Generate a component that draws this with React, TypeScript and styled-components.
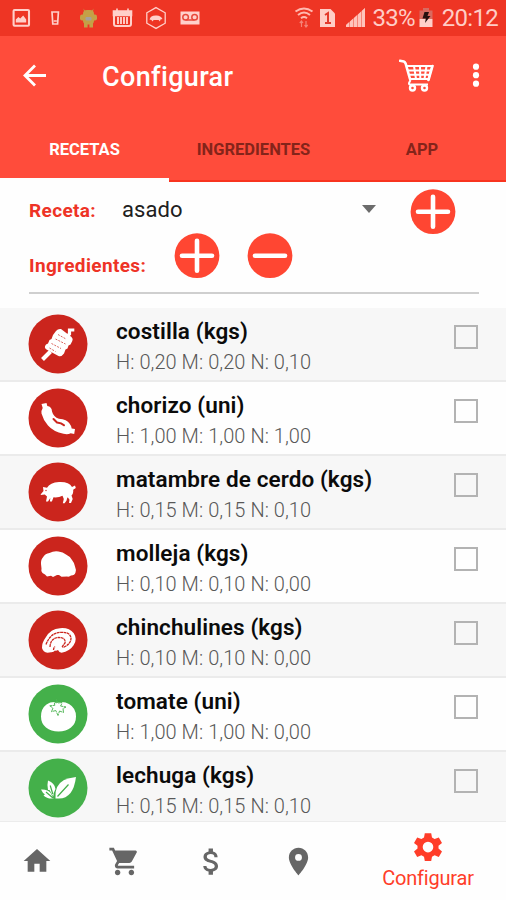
import React from 'react';
import styled, { createGlobalStyle } from 'styled-components';

const GlobalStyle = createGlobalStyle`
  * { box-sizing: border-box; }
  body { margin: 0; background: #fefefe; font-family: Roboto, "Liberation Sans", sans-serif; }
  svg { display: block; flex: none; }
`;

const Screen = styled.div`
  width: 506px;
  height: 900px;
  display: flex;
  flex-direction: column;
  overflow: hidden;
  background: #fefefe;
`;

const StatusBar = styled.div`
  height: 36px;
  flex: none;
  background: #ee3524;
  color: #ffcdc6;
  display: flex;
  justify-content: space-between;
  align-items: center;
  padding: 0 8px 0 12px;
`;

const StatusGroup = styled.div`
  display: flex;
  align-items: center;
`;

const StatusIcon = styled.span<{ $left: number }>`
  margin-left: ${p => p.$left}px;
`;

const StatusText = styled.span<{ $left: number; $spacing: number }>`
  font-size: 24px;
  font-weight: 400;
  line-height: 36px;
  letter-spacing: ${p => p.$spacing}px;
  margin-left: ${p => p.$left}px;
`;

const AppBar = styled.header`
  height: 80px;
  flex: none;
  background: #ff4c3b;
  color: #fff;
  display: flex;
  align-items: center;
  padding: 0 26px 0 22px;
`;

const Title = styled.h1`
  flex: 1;
  margin: 0 0 0 54px;
  font-size: 27px;
  font-weight: 500;
  line-height: 80px;
  padding-top: 2px;
  letter-spacing: 0.35px;
`;

const HeaderActions = styled.div`
  display: flex;
  align-items: center;
  gap: 37px;
`;

const Tabs = styled.nav`
  height: 66px;
  flex: none;
  background: #ff4c3b;
  display: grid;
  grid-template-columns: 169px 169px 168px;
`;

const Tab = styled.div<{ $active?: boolean }>`
  height: 66px;
  text-align: center;
  font-size: 16.5px;
  font-weight: 700;
  line-height: 67px;
  color: ${p => (p.$active ? '#fff' : '#84241a')};
  box-shadow: ${p => (p.$active ? 'inset 0 -4px #fefefe' : 'inset 0 -2px #f8341f')};
`;

const Form = styled.section`
  height: 126px;
  flex: none;
  padding: 7px 27px 0 29px;
  display: flex;
  flex-direction: column;
`;

const FormRow = styled.div<{ $height: number }>`
  height: ${p => p.$height}px;
  display: flex;
  align-items: flex-start;
`;

const Label = styled.label<{ $top: number; $width: number }>`
  width: ${p => p.$width}px;
  margin-top: ${p => p.$top}px;
  color: #ee3326;
  font-size: 19px;
  font-weight: 700;
  line-height: 24px;
  letter-spacing: 0.35px;
  white-space: nowrap;
`;

const Select = styled.div`
  width: 254px;
  height: 41px;
  display: flex;
  align-items: center;
  justify-content: space-between;
  color: #202020;
  font-size: 22px;
  letter-spacing: 0.1px;
`;

const RoundButton = styled.button<{ $left: number }>`
  width: 46px;
  height: 46px;
  margin: 0 0 0 ${p => p.$left}px;
  padding: 0;
  border: 0;
  background: none;
`;

const Divider = styled.div`
  height: 2px;
  margin-top: 15px;
  background: #cfcfcf;
`;

const List = styled.main`
  height: 513px;
  flex: none;
  overflow: hidden;
`;

const Item = styled.article<{ $shaded: boolean }>`
  height: 74px;
  display: flex;
  align-items: flex-start;
  padding: 0 28px;
  background: ${p => (p.$shaded ? '#f7f7f7' : '#fefefe')};
  border-bottom: 2px solid #ebebeb;
`;

const Picture = styled.div`
  width: 60px;
  margin-top: 6px;
`;

const ItemText = styled.div`
  flex: 1;
  padding: 9px 0 0 28px;
`;

const ItemName = styled.div`
  font-size: 22.5px;
  font-weight: 600;
  line-height: 28px;
  color: #0b0b0b;
  letter-spacing: 0.1px;
`;

const ItemAmounts = styled.div`
  font-size: 20px;
  font-weight: 300;
  line-height: 24px;
  margin-top: 5px;
  color: #585858;
  letter-spacing: 0.05px;
`;

const Checkbox = styled.div`
  width: 24px;
  height: 24px;
  margin-top: 17px;
  border: 2px solid #b3b3b3;
`;

const BottomNav = styled.footer`
  height: 79px;
  flex: none;
  border-top: 1px solid #ececec;
  display: flex;
  align-items: flex-start;
  color: #666;
  padding-left: 21px;
`;

const NavItem = styled.div<{ $width: number }>`
  width: ${p => p.$width}px;
  height: 78px;
  display: flex;
  align-items: center;
`;

const ActiveNav = styled.div`
  width: 100px;
  margin-left: 28px;
  padding-top: 9px;
  color: #ff3d29;
  display: flex;
  flex-direction: column;
  align-items: center;
  gap: 2px;
  font-size: 20px;
  line-height: 26px;
  letter-spacing: -0.2px;
`;

const Glyph = ({ d, size = 32 }: { d: string; size?: number }) => (
  <svg width={size} height={size} viewBox="0 0 24 24" fill="currentColor">
    <path d={d} />
  </svg>
);

const paths = {
  home: 'M10 20v-6h4v6h5v-8h3L12 3 2 12h3v8z',
  cart: 'M7 18c-1.1 0-1.99.9-1.99 2S5.9 22 7 22s2-.9 2-2-.9-2-2-2zM1 2v2h2l3.6 7.59-1.35 2.45c-.16.28-.25.61-.25.96 0 1.1.9 2 2 2h12v-2H7.42c-.14 0-.25-.11-.25-.25l.03-.12.9-1.63h7.45c.75 0 1.41-.41 1.75-1.03l3.58-6.49A1 1 0 0 0 20 4H5.21l-.94-2H1zm16 16c-1.1 0-1.99.9-1.99 2s.89 2 1.99 2 2-.9 2-2-.9-2-2-2z',
  money: 'M11.8 10.9c-2.27-.59-3-1.2-3-2.15 0-1.09 1.01-1.85 2.7-1.85 1.78 0 2.44.85 2.5 2.1h2.21c-.07-1.72-1.12-3.3-3.21-3.81V3h-3v2.16c-1.94.42-3.5 1.68-3.5 3.61 0 2.31 1.91 3.46 4.7 4.13 2.5.6 3 1.48 3 2.41 0 .69-.49 1.79-2.7 1.79-2.06 0-2.87-.92-2.98-2.1h-2.2c.12 2.19 1.76 3.42 3.68 3.83V21h3v-2.15c1.95-.37 3.5-1.5 3.5-3.55 0-2.84-2.43-3.81-4.7-4.4z',
  pin: 'M12 2C8.13 2 5 5.13 5 9c0 5.25 7 13 7 13s7-7.75 7-13c0-3.87-3.13-7-7-7zm0 9.5a2.5 2.5 0 0 1 0-5 2.5 2.5 0 0 1 0 5z',
};

const Back = () => (
  <svg width="26" height="26" viewBox="0 0 26 26" fill="none" stroke="#fff" strokeWidth="2.8">
    <path d="M24 12.5H3.5M13 2.5l-10 10 10 10" />
  </svg>
);

const HeaderCart = () => (
  <svg width="36" height="36" viewBox="0 0 36 36" fill="none" stroke="#fff" strokeWidth="2">
    <path d="M7.5 8h25.7L29.5 21H11.5M9 12.5h23M10.500 16.800h20M15 8l2 13M21 8l.3 13M27.500 8l-2 13M11.500 22l-1.500 3.200q-.3 1.300 1.500 1.300H29" />
    <path d="M1 2.700 4.800 3.500Q6 3.900 6.600 5.500L11 21M33.500 8 29.500 22" strokeWidth="2.600" strokeLinecap="round" />
    <circle cx="13.500" cy="30" r="2.500" strokeWidth="2.400" />
    <circle cx="25.500" cy="30" r="2.500" strokeWidth="2.400" />
  </svg>
);

const Dots = () => (
  <svg width="8" height="26" viewBox="0 0 8 26" fill="#fff">
    <circle cx="4" cy="3.700" r="3.100" />
    <circle cx="4" cy="12.200" r="3.100" />
    <circle cx="4" cy="20.700" r="3.100" />
  </svg>
);

const Notifications = () => (
  <svg width="190" height="24" viewBox="12 6 190 24" fill="none" stroke="#ffd0ca" strokeWidth="1.6">
    <rect x="13.6" y="10" width="15.4" height="15.8" rx="1" strokeWidth="2.1" />
    <path d="M15.8 22.6v-3l2.6-2.6 1.8 1.6 3-3.2 3 4v3.2z" fill="#ffd0ca" stroke="none" />
    <path d="M52 12h6.4l-.8 12h-4.8zM53.8 21h3" strokeWidth="1.7" />
    <g fill="#c4a047" stroke="none">
      <rect x="83" y="10" width="11" height="14.5" rx="4" />
      <rect x="80" y="14.5" width="17" height="6" rx="2" />
      <path d="M84 22h3.6v5.5H84zM89.4 22H93v5.5h-3.6zM83.5 8.5l2 3h-1.5zM93.5 8.5l-2 3H93z" />
      <rect x="85.5" y="17" width="6" height="3.6" rx="1" fill="#a5a09d" />
    </g>
    <path d="M114 12.5h17v11.5a2 2 0 0 1-2 2h-13a2 2 0 0 1-2-2z" strokeWidth="2" />
    <path d="M113.5 11h18v4.5h-18zM117 8.6v3M128 8.6v3" fill="#ffd0ca" />
    <path d="M118 17v7M121 17v7M124 17v7M127 17v7" strokeWidth="1.9" />
    <path d="m156 7.6 9.2 5.2v10.4l-9.2 5.2-9.2-5.2V12.8z" strokeWidth="1.3" />
    <path d="M149.5 19.5q1-4 6-4 5-.6 7 3.5l-2 .6-.6 2-1.3-1.7h-5l-1 1.6-1.2-1.6z" fill="#ffd0ca" stroke="none" />
    <rect x="180.5" y="11.5" width="19" height="13" fill="#ffd0ca" stroke="none" />
    <g stroke="#e84a3c" strokeWidth="1.5">
      <circle cx="185.6" cy="17.2" r="2.8" />
      <circle cx="194.6" cy="17.2" r="2.8" />
      <path d="M185.5 20h9" />
    </g>
  </svg>
);

const Wifi = () => (
  <svg width="20" height="24" viewBox="0 0 20 24" fill="none" stroke="#ffb9b0" strokeWidth="2">
    <path d="M1.5 5.5Q10-.5 18.5 5.5M4 9Q10 4 16 9M7 12.2q3-2.4 6 0" />
    <path d="M7.5 15v6M5.8 17l1.7-2 1.5 2M12 15v6m-1.5-2 1.5 2 1.7-2" strokeWidth="1.2" stroke="#f58376" />
  </svg>
);

const Sim = () => (
  <svg width="16" height="20" viewBox="0 0 16 20">
    <path d="M0 1h10.5L15 5.5V19H0z" fill="#ffcdc6" />
    <path d="M5 7l3-2v10M5 15h6" fill="none" stroke="#e33a2c" strokeWidth="2" />
  </svg>
);

const Signal = () => (
  <svg width="20" height="20" viewBox="0 0 20 20" fill="#ffc4bc">
    <path d="M0 19v-2l3-2.7V19zM4 19v-5.5l3-2.7V19zM8 19V10l3-2.8V19zM12 19V6.4l3-2.7V19zM16 19V2.7L19 0v19z" />
    <path d="M0 19v-2L19 0v19z" opacity=".55" />
  </svg>
);

const Battery = () => (
  <svg width="14" height="20" viewBox="0 0 14 20">
    <path d="M4 0h6v2.5h3.5V11H.5V2.5H4z" fill="#d96a60" />
    <path d="M.5 11h13v8H.5z" fill="#ffd0ca" />
    <path d="M5.5 4h4.5L8.5 8h3l-5.5 7 .8-4.5H3.5z" fill="#26110f" />
  </svg>
);

const RoundIcon = ({ plus }: { plus?: boolean }) => (
  <svg width="46" height="46" viewBox="0 0 46 46">
    <circle cx="23" cy="22.7" r="22.4" fill="#ff4632" />
    <path d={plus ? 'M8 22.7h30M23 7.7v30' : 'M8 22.7h30'} stroke="#fff" strokeWidth="4.6" strokeLinecap="round" />
  </svg>
);

const RED = '#cb251d';
const GREEN = '#44b04a';

type Food = 'skewer' | 'sausage' | 'pig' | 'sweetbread' | 'chitterlings' | 'tomato' | 'leaves';

const drawings: Record<Food, React.ReactNode> = {
  skewer: (
    <>
      <path d="M28 17q2-2.5 5-2l10.5 8q2 2 .8 4l-1.800 3.500-2 1-1 3-2 1-1.500 4q-2.500 3.500-5.500 2.500L18.500 35.500q-3-2-.5-5l2-1 1.500-3.500 2-1L25 21z" />
      <path d="m14.500 45.500 8-8" stroke="#fff" strokeWidth="4" fill="none" />
      <path d="M37.500 24l4-4V16h4.800" stroke="#fff" strokeWidth="3.2" fill="none" />
      <path d="m30 20.500 8 4.500M27.500 25l10 5M23.500 29.500l9.500 5M21.500 34l6 3.500" stroke={RED} strokeWidth=".7" strokeDasharray="2 1.200" />
    </>
  ),
  sausage: (
    <>
      <path d="M13.5 16 18.500 15l.8 3Q23.800 18.500 24 23.500q1.500 5.500 7 7.300 8 .7 10.500 4.700 2 2.500 2.200 5l3.300.5-.8 5-3.500-.8q-3 1.800-7.200.6-10-2-15.500-8.300-5-6-6.500-12-.4-3 1.200-5.500z" />
      <path d="m25.500 31 3.500 3.500q4.500.3 7 2.800" stroke={RED} strokeWidth="2" fill="none" strokeLinecap="round" />
    </>
  ),
  pig: (
    <>
      <path d="m13 32 2.500-3-.5-4 4 .8Q22 20.500 31 20q10-.5 13 5l3-1.600.8 2.600-2.600 1.800q.3 4.200-1.700 5.700l1.200 3.500-1.700 4h-2l.5-3.200-1.700-2.600-.8 1.400-.4 2-2 2.600h-1.800l1-4.200-1.300-3.200q-4 2-9 1.500l-1.600 4.200h-2l.4-3.500-2.300 3.500h-2l1-5-2.200-2.100-4.200.7z" />
      <circle cx="18" cy="28.5" r=".7" fill={RED} />
    </>
  ),
  sweetbread: (
    <path d="M13 28q-.3-4.500 2.200-7 2-3.500 6.300-4 4-2.200 9-1.500 4.500.5 7.500 3 4 1.800 6 5.500 2.500 3 3 6.500 1.500 3.500.5 6-.7 3-4.500 3-1.500 1.600-4 1l-5.500.2-2.500-1.700-2 0-4 2-2-1.200-4 .6-2-2-2.500-1.400q-1.800-1.800-1-4.500z" />
  ),
  chitterlings: (
    <>
      <path d="M14 38q-.4-5 4-11 4.500-8 14-8.800 9-.9 13.800 5 4 6.200-.2 12-4 6-12 7.500-2.500-.2-3.600-2.700-1.600 1.200-3 .6-1.400 1.900-4 1.700l-3.500.4q-4.500-.7-5.500-4.700z" />
      <path d="M18 34.500q4.500-12 15-12.200 9.500-.3 10 6-.3 6.500-8.500 9.200M22 37q.5-9 8.500-9.500 7.500 0 6.500 5.500l-3 4M25.500 40q0-2 1.500-3.500" fill="none" stroke={RED} strokeWidth="1.3" strokeDasharray="2.800 .5" />
    </>
  ),
  tomato: (
    <>
      <path d="M13 32.500q0-8 5.500-12 5-3.500 11.500-2 6-1.500 11 1.500 7 4 7 12.500 0 7-5 11-5 4-12.500 4t-12.500-4q-5-4-5-11z" />
      <path d="m28.500 14 1 5 4.500-.5q-.3 2-1.500 3.500l5.500 1-3 1.500.5 4-4-1.500-1.500 4.500-2.200-5-4.300 1.200 1.500-3.700-3.200-2.200 5-.5-.5-2.800 2.500.3z" stroke={GREEN} strokeWidth=".9" strokeDasharray="5 .6" />
    </>
  ),
  leaves: (
    <>
      <path d="M48 19q-1.500 11-5.500 16Q38 40.500 31 40.500h-3.500q-1.500-13 8.500-18.500 4.500-2 12-3z" />
      <path d="M20 22.500q6.800 2.600 7.500 8.500-2.300 4-2.200 7.500l-3.800-6.500h-1.500q-1.100-5 0-9.500zM13 31.500q6.500-.5 9.700 3.500L25.500 40.500q-6.500.6-10-3 1-.3 1.300-1.300-2-.8-3.800-4.700z" />
      <path d="m29.500 38.500 11-12M22.200 27.500l2.600 8.500M18 34l7 6" stroke={GREEN} strokeWidth="1.200" fill="none" />
    </>
  ),
};

const FoodBadge = ({ food, color }: { food: Food; color: string }) => (
  <svg width="60" height="60" viewBox="0 0 60 60" fill="#fff">
    <circle cx="30" cy="30" r="29.5" fill={color} />
    {drawings[food]}
  </svg>
);

const items: { name: string; amounts: string; food: Food; color: string }[] = [
  { name: 'costilla (kgs)', amounts: 'H: 0,20 M: 0,20 N: 0,10', food: 'skewer', color: RED },
  { name: 'chorizo (uni)', amounts: 'H: 1,00 M: 1,00 N: 1,00', food: 'sausage', color: RED },
  { name: 'matambre de cerdo (kgs)', amounts: 'H: 0,15 M: 0,15 N: 0,10', food: 'pig', color: RED },
  { name: 'molleja (kgs)', amounts: 'H: 0,10 M: 0,10 N: 0,00', food: 'sweetbread', color: RED },
  { name: 'chinchulines (kgs)', amounts: 'H: 0,10 M: 0,10 N: 0,00', food: 'chitterlings', color: RED },
  { name: 'tomate (uni)', amounts: 'H: 1,00 M: 1,00 N: 0,00', food: 'tomato', color: GREEN },
  { name: 'lechuga (kgs)', amounts: 'H: 0,15 M: 0,15 N: 0,10', food: 'leaves', color: GREEN },
];

const Gear = () => (
  <svg width="32" height="32" viewBox="0 0 32 32">
    <path
      fill="currentColor"
      fillRule="evenodd"
      d="M12.8 2.2h6.4l.8 4.300 2.600 1.500 4.200-1.600 3.200 5.500-3.500 2.800v2.900l3.500 2.800-3.200 5.500-4.200-1.600-2.600 1.500-.8 4.200h-6.400l-.8-4.200L9.400 24.300l-4.200 1.600L2 20.400l3.500-2.800v-2.900L2 11.900l3.200-5.500L9.400 8 12 6.500zM16 10.800a5.300 5.300 0 1 0 0 10.600 5.300 5.300 0 0 0 0-10.600z"
    />
  </svg>
);

export default function App() {
  return (
    <Screen>
      <GlobalStyle />
      <StatusBar>
        <Notifications />
        <StatusGroup>
          <Wifi />
          <StatusIcon $left={6}><Sim /></StatusIcon>
          <StatusIcon $left={10}><Signal /></StatusIcon>
          <StatusText $left={7} $spacing={-0.8}>33%</StatusText>
          <StatusIcon $left={4}><Battery /></StatusIcon>
          <StatusText $left={9} $spacing={-0.7}>20:12</StatusText>
        </StatusGroup>
      </StatusBar>
      <AppBar>
        <Back />
        <Title>Configurar</Title>
        <HeaderActions>
          <HeaderCart />
          <Dots />
        </HeaderActions>
      </AppBar>
      <Tabs>
        <Tab $active>RECETAS</Tab>
        <Tab>INGREDIENTES</Tab>
        <Tab>APP</Tab>
      </Tabs>
      <Form>
        <FormRow $height={44}>
          <Label $top={10} $width={93}>Receta:</Label>
          <Select>
            asado
            <svg width="14" height="9" viewBox="0 0 14 9"><path d="M0 0h14L7 8z" fill="#6c6c6c" /></svg>
          </Select>
          <RoundButton $left={34} aria-label="Agregar receta"><RoundIcon plus /></RoundButton>
        </FormRow>
        <FormRow $height={44}>
          <Label $top={21} $width={117}>Ingredientes:</Label>
          <RoundButton $left={28} aria-label="Agregar ingrediente"><RoundIcon plus /></RoundButton>
          <RoundButton $left={27} aria-label="Quitar ingrediente"><RoundIcon /></RoundButton>
        </FormRow>
        <Divider />
      </Form>
      <List>
        {items.map((item, i) => (
          <Item key={item.name} $shaded={i % 2 === 0}>
            <Picture><FoodBadge food={item.food} color={item.color} /></Picture>
            <ItemText>
              <ItemName>{item.name}</ItemName>
              <ItemAmounts>{item.amounts}</ItemAmounts>
            </ItemText>
            <Checkbox role="checkbox" aria-checked="false" />
          </Item>
        ))}
      </List>
      <BottomNav>
        <NavItem $width={87}><Glyph d={paths.home} /></NavItem>
        <NavItem $width={86}><Glyph d={paths.cart} size={33} /></NavItem>
        <NavItem $width={88}><Glyph d={paths.money} size={35} /></NavItem>
        <NavItem $width={68}><Glyph d={paths.pin} size={33} /></NavItem>
        <ActiveNav>
          <Gear />
          Configurar
        </ActiveNav>
      </BottomNav>
    </Screen>
  );
}
